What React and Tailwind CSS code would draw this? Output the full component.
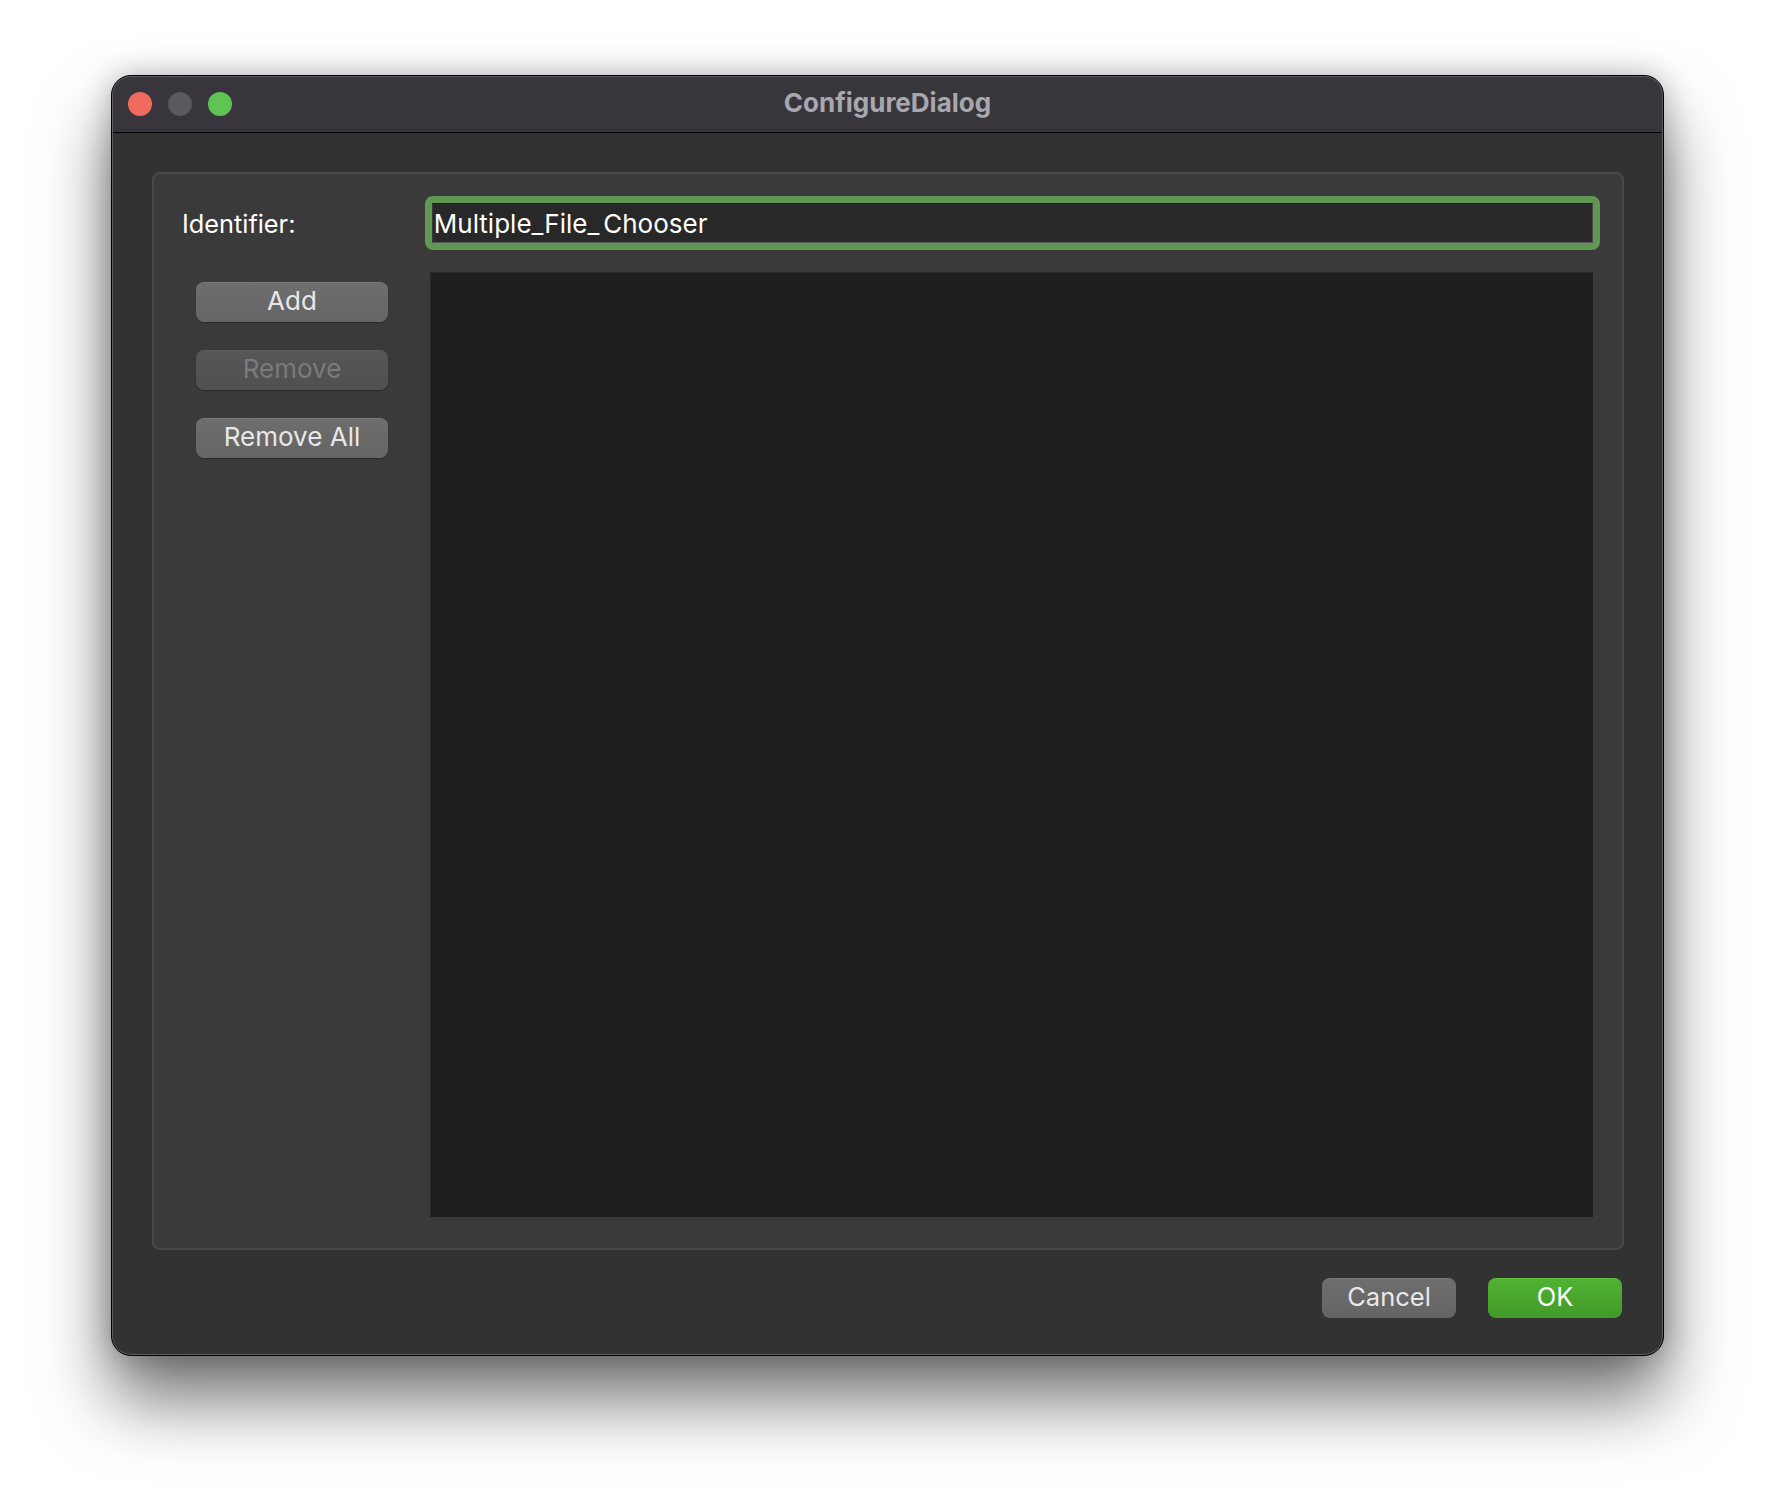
import React from 'react';

const font = "font-['Inter','Liberation_Sans',sans-serif]";

const SideButton = ({ children, disabled }) => (
  <button
    className={
      disabled
        ? 'h-10 w-48 rounded-lg border-t border-[#5c5c5c] bg-gradient-to-b from-[#565656] to-[#505050] pb-[3px] text-[26px] leading-none text-[#7b7b7b] shadow-[0_1px_1px_rgba(0,0,0,0.3)]'
        : 'h-10 w-48 rounded-lg border-t border-[#777777] bg-gradient-to-b from-[#6e6e6e] to-[#646464] pb-[3px] text-[26px] leading-none text-[#e8e8e8] shadow-[0_1px_1px_rgba(0,0,0,0.3)]'
    }
  >
    {children}
  </button>
);

export default function App() {
  return (
    <div className={`h-[1504px] w-[1776px] overflow-hidden bg-white pl-[111px] pt-[75px] ${font}`}>
      <div className="relative flex h-[1281px] w-[1553px] flex-col overflow-hidden rounded-[20px] border border-black bg-[#323232] shadow-[0_44px_70px_rgba(0,0,0,0.55),0_0_30px_rgba(0,0,0,0.25)]">
        <div className="relative flex h-[57px] shrink-0 items-center border-b border-black bg-[#38363c] pl-[16px]">
          <div className="flex gap-4">
            <span className="h-6 w-6 rounded-full bg-[#f06a5e]" />
            <span className="h-6 w-6 rounded-full bg-[#5b5960]" />
            <span className="h-6 w-6 rounded-full bg-[#5fc454]" />
          </div>
          <div className="absolute inset-0 flex items-center justify-center pb-[3px] text-[26px] font-bold text-[#a9a7ae]">
            ConfigureDialog
          </div>
        </div>

        <div className="flex flex-1 flex-col px-10 pb-[37px] pt-[39px]">
          <div className="flex h-[1078px] w-[1472px] flex-col rounded-lg border-2 border-[#484848] bg-[#3a3a3a] pl-[28px] pr-[22px] pt-[22px]">
            <div className="flex h-[54px] items-center">
              <label className="w-[243px] pt-px text-[25.3px] text-white">Identifier:</label>
              <div className="h-[54px] w-[1176px] rounded-lg border-[7px] border-[#609752]">
                <div className="flex h-full items-center border border-t-[#202020] border-r-[#4a4a4a] border-b-[#585858] border-l-[#3a3a3a] bg-[#282828] pl-px">
                  <span className="text-[26px] text-white">
                    Multiple_File_<span className="ml-1">Chooser</span>
                  </span>
                </div>
              </div>
            </div>
            <div className="mt-[22px] flex items-start">
              <div className="ml-[14px] mt-[10px] flex w-[234px] flex-col gap-7">
                <SideButton>Add</SideButton>
                <SideButton disabled>Remove</SideButton>
                <SideButton>Remove All</SideButton>
              </div>
              <div className="h-[945px] w-[1163px] border-l border-t border-[#2a2a2a] bg-[#1e1e1e]" />
            </div>
          </div>
          <div className="mt-7 flex w-[1470px] justify-end gap-8">
            <button className="h-10 w-[134px] rounded-lg border-t border-[#777777] bg-gradient-to-b from-[#6e6e6e] to-[#646464] pb-[3px] text-[25.5px] leading-none text-[#e8e8e8]">
              Cancel
            </button>
            <button className="h-10 w-[134px] rounded-lg border-t border-[#5cbc3e] bg-gradient-to-b from-[#50b233] to-[#429a27] pb-[3px] text-[25.5px] leading-none text-white">
              OK
            </button>
          </div>
        </div>
        <div className="pointer-events-none absolute inset-0 rounded-[19px] border border-[#5e5e5e]" />
      </div>
    </div>
  );
}
